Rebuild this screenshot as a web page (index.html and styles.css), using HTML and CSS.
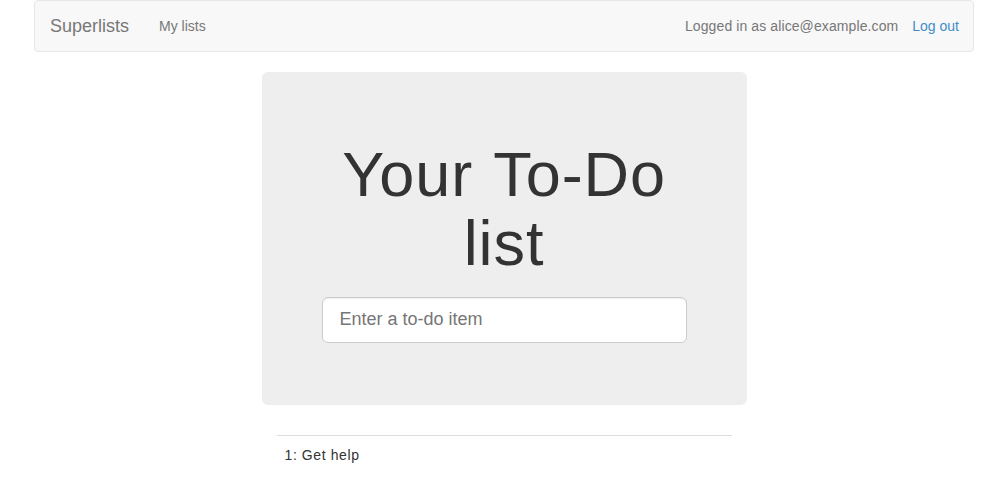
FILE: index.html
```html
<!DOCTYPE html>
<html lang="en">
<head>
<meta charset="utf-8">
<title>To-Do lists</title>
<link rel="stylesheet" href="styles.css">
</head>
<body>
<div class="container">
  <nav class="navbar">
    <div class="nav-left">
      <a class="brand" href="#">Superlists</a>
      <a class="nav-link" href="#">My lists</a>
    </div>
    <div class="nav-right">
      <span class="nav-text">Logged in as alice@example.com</span>
      <a class="logout" href="#">Log out</a>
    </div>
  </nav>

  <div class="row">
    <div class="col">
      <div class="jumbotron">
        <h1 class="title">Your To-Do list</h1>
        <form class="form">
          <input class="input" type="text" placeholder="Enter a to-do item">
        </form>
      </div>
    </div>
  </div>

  <div class="row">
    <div class="col">
      <table class="table">
        <tr><td>1: Get help</td></tr>
      </table>
    </div>
  </div>
</div>
</body>
</html>
```

FILE: styles.css
```css
* { box-sizing: border-box; }
html, body { margin: 0; }
body {
  font-family: "Liberation Sans", Arial, Helvetica, sans-serif;
  font-size: 14px;
  line-height: 1.42857;
  color: #333;
  background: #fff;
}
a { text-decoration: none; }
.container {
  width: 970px;
  margin: 0 auto;
  padding: 0 15px;
}
.navbar {
  display: flex;
  justify-content: space-between;
  align-items: center;
  height: 52px;
  background: #f8f8f8;
  border: 1px solid #e7e7e7;
  border-radius: 4px;
  margin-bottom: 20px;
}
.nav-left, .nav-right { display: flex; align-items: center; }
.brand {
  font-size: 18px;
  line-height: 20px;
  padding: 15px;
  color: #777;
}
.nav-link {
  padding: 15px;
  line-height: 20px;
  color: #777;
}
.nav-text {
  color: #777;
  line-height: 20px;
  margin: 15px 0;
  letter-spacing: 0.1px;
}
.logout {
  color: #428bca;
  line-height: 20px;
  padding: 15px 14px 15px 14px;
}
.row { display: flex; justify-content: center; }
.col { width: 485px; padding: 0 15px; }
.jumbotron {
  margin: 0 -15px 30px;
  background: #eee;
  border-radius: 6px;
  padding: 48px 60px;
  text-align: center;
}
.title {
  font-size: 63px;
  font-weight: 500;
  line-height: 1.1;
  margin: 20px 0 18px;
  color: #333;
  letter-spacing: 0.9px;
  word-spacing: 3px;
}
.form { margin-bottom: 14px; }
.input {
  display: block;
  width: 100%;
  height: 46px;
  padding: 10px 17px;
  font-family: inherit;
  font-size: 18px;
  line-height: 1.33;
  color: #555;
  background: #fff;
  border: 1px solid #ccc;
  border-radius: 6px;
  box-shadow: inset 0 1px 1px rgba(0,0,0,0.075);
}
.input::placeholder { color: #767676; }
.table {
  width: 100%;
  border-collapse: collapse;
  border-spacing: 0;
}
.table td {
  padding: 9px 8px 7px;
  line-height: 20px;
  border-top: 1px solid #ddd;
  letter-spacing: 0.6px;
}
```
